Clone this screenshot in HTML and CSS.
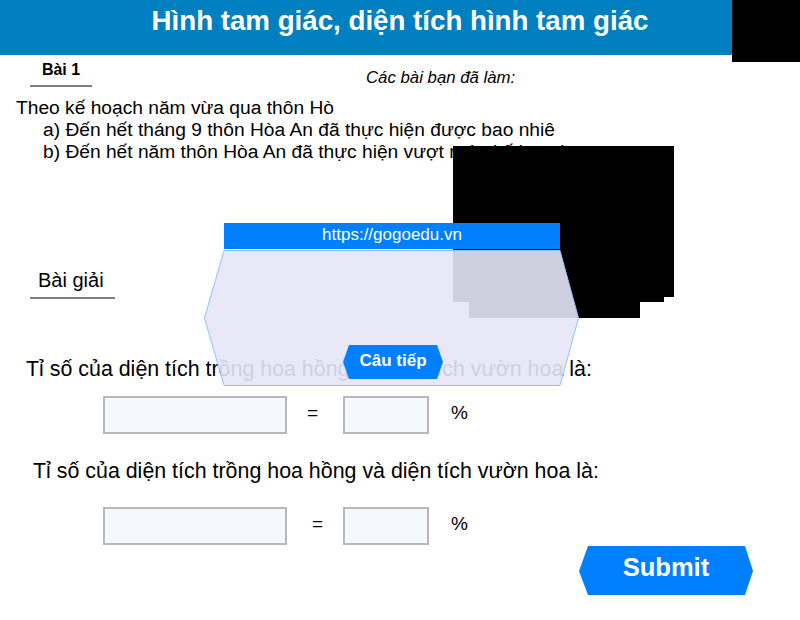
FILE: index.html
```html
<!DOCTYPE html>
<html lang="vi">
<head>
<meta charset="utf-8">
<title>Hình tam giác, diện tích hình tam giác</title>
<link rel="stylesheet" href="styles.css">
</head>
<body>
<div class="page">
  <header class="topbar">
    <h1 class="title">Hình tam giác, diện tích hình tam giác</h1>
  </header>

  <div class="tabrow">
    <div class="tab">Bài 1</div>
    <div class="done">Các bài bạn đã làm:</div>
  </div>

  <div class="problem">
    <p class="line">Theo kế hoạch năm vừa qua thôn Hò</p>
    <p class="line sub">a) Đến hết tháng 9 thôn Hòa An đã thực hiện được bao nhiê</p>
    <p class="line sub">b) Đến hết năm thôn Hòa An đã thực hiện vượt mức kế hoạch</p>
  </div>

  <div class="solution-title">Bài giải</div>

  <p class="question q1">Tỉ số của diện tích trồng hoa hồng và diện tích vườn hoa là:</p>
  <div class="answer-row">
    <input class="box wide" type="text">
    <span class="eq eq1">=</span>
    <input class="box narrow" type="text">
    <span class="pct">%</span>
  </div>

  <p class="question q2">Tỉ số của diện tích trồng hoa hồng và diện tích vườn hoa là:</p>
  <div class="answer-row">
    <input class="box wide" type="text">
    <span class="eq eq2">=</span>
    <input class="box narrow" type="text">
    <span class="pct">%</span>
  </div>

  <div class="submit-row">
    <button class="submit" type="button">Submit</button>
  </div>

  <div class="redact redact-top"></div>
  <div class="redact redact-a"></div>
  <div class="redact redact-b"></div>
  <div class="redact redact-c"></div>

  <div class="popup">
    <div class="popup-bar">https://gogoedu.vn</div>
    <svg class="popup-hex" width="376" height="138" viewBox="0 0 376 138">
      <polygon points="20,0.5 356,0.5 374.5,68 356,135.5 20,135.5 0.5,68" fill="rgba(230,229,248,0.9)" stroke="#8cc4ff" stroke-width="1"/>
    </svg>
  </div>
  <button class="next" type="button">Câu tiếp</button>
</div>
</body>
</html>
```

FILE: styles.css
```css
html, body {
  margin: 0;
  padding: 0;
  background: #fff;
}
body {
  font-family: "Liberation Sans", Arial, sans-serif;
  color: #000;
}
.page {
  position: relative;
  width: 800px;
  height: 620px;
  overflow: hidden;
}
.topbar {
  height: 55px;
  background: #0080c0;
}
.title {
  margin: 0;
  font-size: 27.7px;
  font-weight: bold;
  line-height: 42px;
  text-align: center;
  color: #fff;
}
.tabrow {
  display: flex;
  align-items: flex-start;
}
.tab {
  margin-left: 30px;
  width: 62px;
  padding: 4px 0 4px;
  font-size: 16px;
  font-weight: bold;
  line-height: 22px;
  text-align: center;
  border-bottom: 2px solid #808080;
}
.done {
  margin: 12px 0 0 274px;
  font-size: 16.8px;
  font-style: italic;
  line-height: 22px;
}
.problem {
  margin-top: 8px;
  width: 600px;
  overflow: hidden;
}
.line {
  margin: 0;
  padding-left: 16px;
  font-size: 19.2px;
  line-height: 22px;
  white-space: nowrap;
}
.line.sub {
  padding-left: 43px;
}
.solution-title {
  margin: 105px 0 0 30px;
  width: 77px;
  padding: 0 0 5px 8px;
  font-size: 20px;
  line-height: 24px;
  border-bottom: 2px solid #808080;
}
.question {
  margin: 0;
  font-size: 21.4px;
  line-height: 26px;
  white-space: nowrap;
}
.q1 {
  margin-top: 57px;
  padding-left: 26px;
}
.q2 {
  margin-top: 24px;
  padding-left: 33px;
}
.answer-row {
  display: flex;
  align-items: center;
  height: 38px;
  padding-left: 103px;
  margin-top: 14px;
}
.q2 + .answer-row {
  margin-top: 23px;
}
.box {
  box-sizing: border-box;
  height: 38px;
  margin: 0;
  padding: 0;
  border: 2px solid #b8b8b8;
  background: #f5f9ff;
  outline: none;
}
.wide {
  width: 184px;
}
.narrow {
  width: 86px;
}
.eq {
  box-sizing: border-box;
  width: 56px;
  padding-bottom: 4px;
  text-align: center;
  font-size: 19px;
}
.eq1 {
  padding-right: 5px;
}
.eq2 {
  padding-left: 5px;
}
.pct {
  margin-left: 22px;
  padding-bottom: 4px;
  font-size: 19px;
}
.submit-row {
  margin-top: 1px;
  padding-left: 579px;
}
.submit {
  display: block;
  width: 174px;
  height: 49px;
  margin: 0;
  padding: 0 0 7px;
  border: none;
  background: #0080ff;
  color: #fff;
  font-family: "Liberation Sans", Arial, sans-serif;
  font-size: 25.5px;
  font-weight: bold;
  clip-path: polygon(9px 0, 166px 0, 174px 25px, 166px 49px, 9px 49px, 0 25px);
}
.redact {
  position: absolute;
  background: #000;
}
.redact-top {
  left: 732px;
  top: 0;
  width: 68px;
  height: 62px;
}
.redact-a {
  left: 453px;
  top: 146px;
  width: 221px;
  height: 151px;
}
.redact-b {
  left: 453px;
  top: 146px;
  width: 211px;
  height: 156px;
}
.redact-c {
  left: 469px;
  top: 146px;
  width: 171px;
  height: 172px;
}
.popup {
  position: absolute;
  left: 204px;
  top: 223px;
  width: 376px;
}
.popup-bar {
  margin-left: 20px;
  width: 336px;
  height: 26px;
  background: #0080ff;
  color: #fff;
  font-size: 17px;
  line-height: 24px;
  text-align: center;
}
.popup-hex {
  display: block;
  margin-top: 1px;
}
.next {
  position: absolute;
  left: 343px;
  top: 345px;
  width: 100px;
  height: 34px;
  margin: 0;
  padding: 0 0 3px;
  border: none;
  background: #0080ff;
  color: #fff;
  font-family: "Liberation Sans", Arial, sans-serif;
  font-size: 17px;
  font-weight: bold;
  clip-path: polygon(6px 0, 94px 0, 100px 17px, 94px 34px, 6px 34px, 0 17px);
}
```
